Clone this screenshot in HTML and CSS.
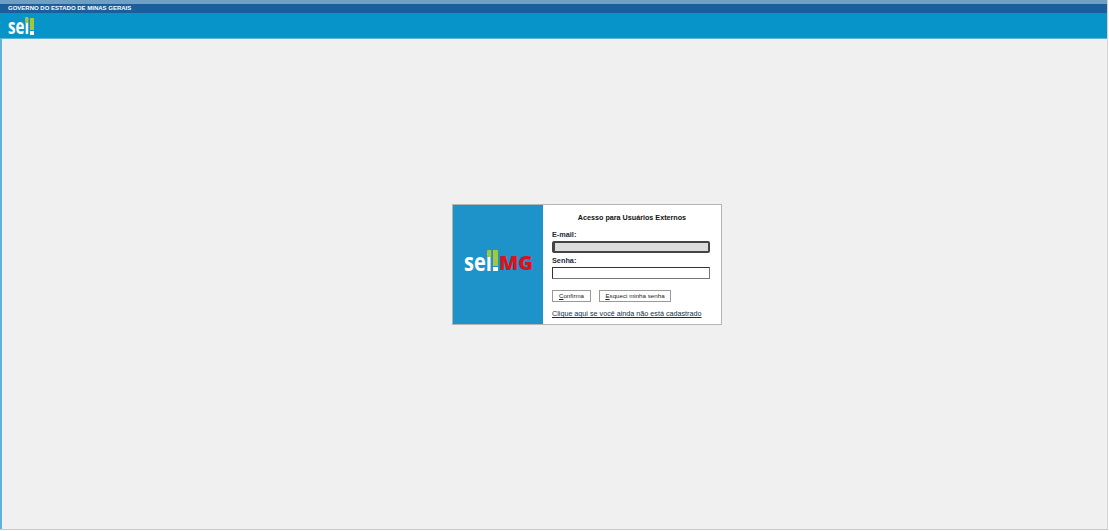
FILE: index.html
```html
<!DOCTYPE html>
<html lang="pt-BR">
<head>
  <meta charset="UTF-8" />
  <title>SEI - Acesso para Usuários Externos</title>
  <link rel="stylesheet" href="styles.css">
</head>
<body>
  <div class="page">
    <div class="top-strip"></div>
    <div class="gov-bar">GOVERNO DO ESTADO DE MINAS GERAIS</div>
    <div class="sys-bar">
      <div class="logo logo-small">
        <span class="logo-sei">sei</span>
        <span class="logo-mark"><i class="mark-top"></i><i class="mark-bottom"></i></span>
      </div>
    </div>
    <div class="main">
      <div class="login-box">
        <div class="login-side">
          <div class="logo logo-big">
            <span class="logo-sei">sei</span>
            <span class="logo-mark"><i class="mark-top"></i><i class="mark-bottom"></i></span>
            <span class="logo-mg">MG</span>
          </div>
        </div>
        <form class="login-form">
          <h1 class="login-title">Acesso para Usuários Externos</h1>
          <label class="field-label" for="email">E-mail:</label>
          <input class="field field-focus" type="text" id="email" />
          <label class="field-label field-label-second" for="senha">Senha:</label>
          <input class="field" type="password" id="senha" />
          <div class="buttons">
            <button type="button" class="btn btn-confirm"><u>C</u>onfirma</button>
            <button type="button" class="btn btn-forgot"><u>E</u>squeci minha senha</button>
          </div>
          <a href="#" class="register-link">Clique aqui se você ainda não está cadastrado</a>
        </form>
      </div>
    </div>
  </div>
</body>
</html>
```

FILE: styles.css
```css
html, body {
  margin: 0;
  height: 100%;
}

body {
  background: #fff;
  font-family: "Liberation Sans", Arial, sans-serif;
  overflow: hidden;
}

.page {
  height: 530px;
  width: 1108px;
  display: flex;
  flex-direction: column;
  box-sizing: border-box;
  background: #f0f0f0;
  border-right: 1px solid #d4d4d4;
  border-bottom: 1px solid #c8c8c8;
}

.top-strip {
  height: 4px;
  background: #6f9fc2;
}

.gov-bar {
  height: 9px;
  line-height: 9px;
  background: #1a5f9c;
  color: #fff;
  font-size: 6px;
  font-weight: bold;
  padding-left: 8px;
}

.sys-bar {
  height: 25px;
  background: #0795c9;
  border-bottom: 1px solid #5bb5d8;
  padding-left: 8px;
  display: flex;
  align-items: center;
}

.main {
  flex: 1;
  border-left: 2px solid #5fb2da;
  padding: 165px 0 0 450px;
}

.login-box {
  width: 270px;
  height: 121px;
  box-sizing: border-box;
  display: flex;
  background: #fff;
  border: 1px solid #b4b4b4;
}

.login-side {
  width: 90px;
  flex: none;
  box-sizing: border-box;
  padding: 0 0 10px 11px;
  background: #1d93c9;
  display: flex;
  align-items: center;
}

.logo {
  display: flex;
  align-items: flex-end;
  font-weight: bold;
  line-height: 1;
}

.logo-sei {
  position: relative;
  color: #fff;
  font-family: "Open Sans", sans-serif;
  transform-origin: left bottom;
  white-space: nowrap;
}

/* green dot of the i */
.logo-sei::after {
  content: "";
  position: absolute;
  left: 1.15em;
  top: 0.06em;
  width: 0.19em;
  height: 0.26em;
  background: #a6c63c;
}

.logo-mark {
  display: flex;
  flex-direction: column;
  align-items: stretch;
}

.mark-top {
  display: block;
  margin-bottom: 1px;
  background: #a6c63c;
}

.mark-bottom {
  display: block;
  height: 4px;
  background: #fff;
}

/* the logo letters are narrow and tall, so the text gets squeezed */
.logo-small .logo-sei {
  width: 21px;
  font-size: 21px;
  margin-bottom: -2px;
  transform: scaleX(0.72);
}

.logo-small .logo-mark {
  margin-left: 1px;
  width: 4px;
}

.logo-small .mark-top {
  height: 12px;
}

.logo-big {
  height: 22px;
}

.logo-big .logo-sei {
  width: 28px;
  font-size: 25px;
  margin-bottom: -3px;
  transform: scaleX(0.8);
}

.logo-big .logo-mark {
  margin-left: 1px;
  width: 5px;
}

.logo-big .mark-top {
  height: 16px;
}

.logo-mg {
  color: #d9121f;
  font-family: "Open Sans", sans-serif;
  font-size: 20px;
  font-weight: 800;
  margin: 0 0 -2px 1px;
}

.login-form {
  flex: 1;
  display: flex;
  flex-direction: column;
  padding: 8px 12px 0 9px;
  color: #111;
}

.login-title {
  margin: 0 0 7px;
  font-size: 7.2px;
  line-height: 10px;
  font-weight: bold;
  text-align: center;
  padding-left: 2px;
}

.field-label {
  font-size: 7.3px;
  line-height: 10px;
  font-weight: bold;
  color: #1b2a3a;
  margin-bottom: 1px;
}

.field-label-second {
  margin-top: 3px;
}

.field {
  display: block;
  box-sizing: border-box;
  width: 158px;
  height: 12px;
  margin: 0;
  padding: 0;
  background: #fff;
  border: 1px solid #333;
  border-right-color: #777;
  border-bottom-color: #777;
  outline: none;
}

.field-focus {
  background: #dcdcdc;
  border: 2px solid #444;
  border-left-width: 3px;
  border-radius: 2px;
}

.buttons {
  display: flex;
  gap: 8px;
  margin-top: 11px;
}

.btn {
  height: 12px;
  padding: 0;
  box-sizing: border-box;
  background: #fff;
  border: 1px solid #999;
  border-radius: 0;
  color: #222;
  font-family: "Liberation Sans", Arial, sans-serif;
  font-size: 6.2px;
  line-height: 10px;
}

.btn-confirm {
  width: 39px;
}

.btn-forgot {
  width: 72px;
}

.register-link {
  margin-top: 7px;
  font-size: 7.2px;
  line-height: 10px;
  color: #12304f;
  white-space: nowrap;
}
```
